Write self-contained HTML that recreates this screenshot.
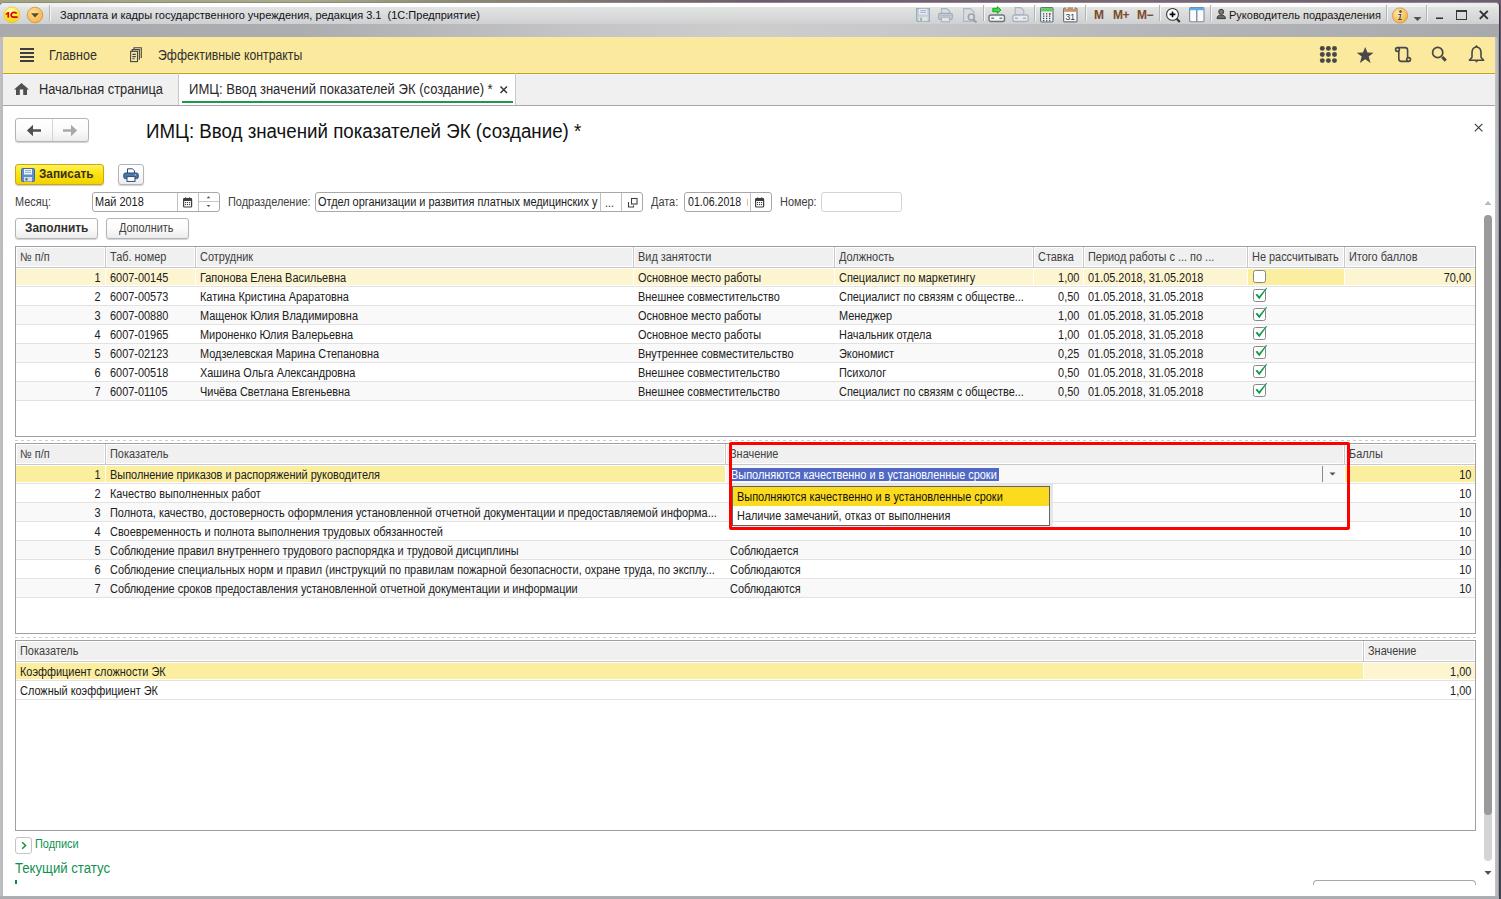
<!DOCTYPE html><html><head><meta charset="utf-8"><style>
html,body{margin:0;padding:0;}
body{width:1501px;height:899px;position:relative;overflow:hidden;background:#6a5a6a;font-family:"Liberation Sans", sans-serif;}
body div{position:absolute;box-sizing:border-box;}
</style></head><body>
<div style="left:0px;top:0px;width:760px;height:3px;background:linear-gradient(90deg,#9fa27a,#a9ac84 40%,#8d8a70 60%,#6f5a6c);"></div>
<div style="left:760px;top:0px;width:741px;height:3px;background:linear-gradient(90deg,#6f5a6c,#7d6878 50%,#6d5e70);"></div>
<div style="left:1499px;top:0px;width:2px;height:899px;background:linear-gradient(180deg,#6d5e70,#3a3448 30%,#2a2a3a 60%,#404858);"></div>
<div style="left:0px;top:2px;width:1499px;height:897px;background:#bcbdc0;border-radius:4px 4px 0 0;border-top:1px solid #8a8a8e;"></div>
<div style="left:0px;top:3px;width:1499px;height:21px;background:linear-gradient(180deg,#e6e6e7 0px,#e2e3e3 4.5px,#cfd0d1 21px);border-radius:4px 4px 0 0;"></div>
<div style="left:0px;top:3px;width:1499px;height:4px;background:linear-gradient(90deg,rgba(255,255,255,0.2) 0%,rgba(255,255,255,0.95) 12%,#ffffff 50%,rgba(255,255,255,0.95) 88%,rgba(255,255,255,0.2) 100%);border-radius:4px 4px 0 0;"></div>
<div style="left:0px;top:24px;width:1499px;height:13px;background:linear-gradient(90deg,#a9aaad 0%,#acadb0 20%,#c4c4c6 38%,#cdcdce 50%,#c8c8ca 60%,#b4b5b8 78%,#a8a9ad 100%);"></div>
<div style="left:1495px;top:37px;width:4px;height:859px;background:linear-gradient(90deg,#c4c5c8,#b4b5b8 70%,#8e8e94);"></div>
<div style="left:0px;top:37px;width:3px;height:859px;background:linear-gradient(90deg,#c0c1c4,#b8b9bc);"></div>
<div style="left:0px;top:896px;width:1499px;height:3px;background:linear-gradient(180deg,#b0b1b4,#a8a9ac);"></div>
<div style="left:1499px;top:4px;width:1px;height:895px;background:#3a3a44;"></div>
<div style="left:3px;top:37px;width:1492px;height:859px;background:#ffffff;"></div>
<svg style="position:absolute;left:3px;top:6px;" width="18" height="18" viewBox="0 0 18 18"><defs><radialGradient id="lg" cx="45%" cy="30%" r="75%"><stop offset="0" stop-color="#fffbd0"/><stop offset="0.55" stop-color="#ffec30"/><stop offset="1" stop-color="#f4cc00"/></radialGradient></defs><circle cx="8.8" cy="8.8" r="7.9" fill="url(#lg)" stroke="#e0c060" stroke-width="0.7"/><path d="M2.7 7.6 L5 6 H6.1 V11.8 H4.4 V8.2 L2.7 9.1 Z" fill="#e00000"/><path d="M13.6 7.6 C13.1 6.4 12.1 6.3 11.1 6.3 C9.5 6.3 8.1 7.5 8.1 9 C8.1 10.6 9.3 11.2 10.6 11.2 H14.6" fill="none" stroke="#e00000" stroke-width="1.7"/></svg>
<svg style="position:absolute;left:26px;top:6px;" width="18" height="18" viewBox="0 0 18 18"><defs><radialGradient id="og" cx="40%" cy="35%" r="70%"><stop offset="0" stop-color="#ffe0a0"/><stop offset="1" stop-color="#f8b040"/></radialGradient></defs><circle cx="9" cy="9" r="7.8" fill="url(#og)" stroke="#c89838" stroke-width="0.8"/><path d="M5 7.2 L13 7.2 L9 11.5 Z" fill="#5a4a30"/></svg>
<div style="left:49px;top:5px;width:1px;height:16px;background:#b4b4b6;"></div>
<div style="left:50px;top:5px;width:1px;height:16px;background:#f4f4f4;"></div>
<div style="left:60px;top:10px;font-size:11px;line-height:11px;color:#101020;white-space:pre;">Зарплата и кадры государственного учреждения, редакция 3.1  (1С:Предприятие)</div>
<svg style="position:absolute;left:916px;top:8px;" width="15" height="15" viewBox="0 0 15 15"><path d="M0.6 0.6 H13.4 V13.4 H1.6 L0.6 12.4 Z" fill="#c8d0da" stroke="#9eacbc" stroke-width="1.2"/><rect x="3" y="0.8" width="8.2" height="5.6" fill="#e8ecf0"/><path d="M4.2 2.6 H10 M4.2 4.4 H10" stroke="#9eacbc" stroke-width="0.9"/><rect x="3" y="8.8" width="8.5" height="4.4" fill="#dde6dc"/><rect x="4.2" y="9.6" width="1.8" height="3.4" fill="#9eacbc"/></svg>
<svg style="position:absolute;left:938px;top:8px;" width="16" height="15" viewBox="0 0 16 15"><path d="M3.5 0.6 H8.8 L11.5 3.3 V6 H3.5 Z" fill="#dcdcdc" stroke="#a8b4c2" stroke-width="1.1"/><rect x="0.7" y="5.3" width="13.6" height="6" rx="1.6" fill="#c8d0d8" stroke="#9eacbc" stroke-width="1.3"/><path d="M2.5 7.3 H12.5" stroke="#a8b4c2" stroke-width="0.9"/><rect x="3.5" y="9.2" width="8" height="4.6" fill="#e4e4e4" stroke="#a8b4c2" stroke-width="1.1"/></svg>
<svg style="position:absolute;left:963px;top:8px;" width="16" height="16" viewBox="0 0 16 16"><path d="M0.6 0.6 H7.5 L11 4.1 V13.4 H0.6 Z" fill="#dcdcdc" stroke="#a8b8cc" stroke-width="1.1"/><circle cx="8.3" cy="9" r="3" fill="#dcdcdc" stroke="#98a4ac" stroke-width="1.6"/><path d="M10.3 11.2 L13.5 14.6" stroke="#98a4ac" stroke-width="2"/></svg>
<div style="left:983px;top:5px;width:1px;height:16px;background:#b4b4b6;"></div>
<div style="left:984px;top:5px;width:1px;height:16px;background:#f4f4f4;"></div>
<svg style="position:absolute;left:988px;top:6px;" width="18" height="17" viewBox="0 0 18 17"><path d="M4.8 2.3 H9.3 V0.6 L13 4 L9.3 7.4 V5.7 H4.8 Z" fill="#38e038" stroke="#1a9a1a" stroke-width="0.9"/><rect x="1" y="9" width="15.5" height="6.5" rx="2" fill="#f4f4f4" stroke="#6c747c" stroke-width="1.4"/><path d="M3.3 12.2 H6 M11.5 12.2 H14.2" stroke="#7a828a" stroke-width="1.6"/><path d="M6.5 12.2 H11" stroke="#ffffff" stroke-width="1.3"/></svg>
<svg style="position:absolute;left:1012px;top:7px;" width="17" height="16" viewBox="0 0 17 16"><path d="M3.2 0.6 H8.8 L11.8 3.6 V7.5 H3.2 Z" fill="#dcdcdc" stroke="#a8b4c2" stroke-width="1.1"/><rect x="0.8" y="8" width="15.4" height="6.5" rx="2" fill="#e8eaec" stroke="#a8b4c2" stroke-width="1.4"/><path d="M3 11.2 H6 M11 11.2 H14" stroke="#a8b4c2" stroke-width="1.5"/></svg>
<div style="left:1034px;top:5px;width:1px;height:16px;background:#b4b4b6;"></div>
<div style="left:1035px;top:5px;width:1px;height:16px;background:#f4f4f4;"></div>
<svg style="position:absolute;left:1040px;top:7px;" width="14" height="16" viewBox="0 0 14 16"><rect x="0.6" y="0.6" width="12.4" height="14.4" rx="1.2" fill="#eef2f6" stroke="#6a7480" stroke-width="1.2"/><rect x="1.2" y="1.2" width="11.2" height="3.3" fill="#58d058"/><rect x="3" y="6.2" width="1.3" height="1.3" fill="#404850"/><rect x="6" y="6.2" width="1.3" height="1.3" fill="#404850"/><rect x="9" y="6.2" width="1.3" height="1.3" fill="#404850"/><rect x="3" y="8.5" width="1.3" height="1.3" fill="#404850"/><rect x="6" y="8.5" width="1.3" height="1.3" fill="#404850"/><rect x="9" y="8.5" width="1.3" height="1.3" fill="#404850"/><rect x="3" y="10.8" width="1.3" height="1.3" fill="#404850"/><rect x="6" y="10.8" width="1.3" height="1.3" fill="#404850"/><rect x="9" y="10.8" width="1.3" height="1.3" fill="#404850"/><rect x="3" y="13.1" width="1.3" height="1.3" fill="#404850"/><rect x="6" y="13.1" width="1.3" height="1.3" fill="#404850"/><rect x="9" y="13.1" width="1.3" height="1.3" fill="#404850"/><rect x="9" y="6" width="1.4" height="2" fill="#e02020"/></svg>
<svg style="position:absolute;left:1063px;top:6px;" width="15" height="17" viewBox="0 0 15 17"><rect x="0.6" y="2.1" width="13.4" height="13.8" rx="1.2" fill="#f8fafc" stroke="#6a7480" stroke-width="1.2"/><rect x="1.2" y="2.6" width="12.2" height="3.2" fill="#d09060"/><path d="M3.8 0.8 V3 M10.8 0.8 V3" stroke="#ffffff" stroke-width="1.1"/><text x="2.4" y="14" font-family="Liberation Sans" font-size="8.6" fill="#303840">31</text></svg>
<div style="left:1085px;top:5px;width:1px;height:16px;background:#b4b4b6;"></div>
<div style="left:1086px;top:5px;width:1px;height:16px;background:#f4f4f4;"></div>
<div style="left:1094px;top:9px;font-size:12px;line-height:12px;color:#7a4a28;white-space:pre;font-weight:bold;font-weight:bold;">M</div>
<div style="left:1113px;top:9px;font-size:12px;line-height:12px;color:#7a4a28;white-space:pre;font-weight:bold;font-weight:bold;letter-spacing:-0.5px;">M+</div>
<div style="left:1137px;top:9px;font-size:12px;line-height:12px;color:#7a4a28;white-space:pre;font-weight:bold;font-weight:bold;letter-spacing:-0.5px;">M−</div>
<div style="left:1159px;top:5px;width:1px;height:16px;background:#b4b4b6;"></div>
<div style="left:1160px;top:5px;width:1px;height:16px;background:#f4f4f4;"></div>
<svg style="position:absolute;left:1165px;top:7px;" width="17" height="17" viewBox="0 0 17 17"><circle cx="7.5" cy="7.4" r="5.9" fill="#ffffff" stroke="#383838" stroke-width="1.1"/><path d="M4.6 7.4 H10.4 M7.5 4.5 V10.3" stroke="#000000" stroke-width="1.6"/><path d="M11.6 11.8 L14.8 15" stroke="#303030" stroke-width="2.1"/></svg>
<svg style="position:absolute;left:1189px;top:7px;" width="16" height="16" viewBox="0 0 16 16"><rect x="0.6" y="0.6" width="14.4" height="14.2" rx="1.2" fill="#fafafa" stroke="#7c8c9c" stroke-width="1.1"/><rect x="1" y="1" width="13.6" height="2.2" fill="#58acf0"/><path d="M7.8 3 V14.6" stroke="#6a7a8a" stroke-width="1.2"/></svg>
<div style="left:1210px;top:5px;width:1px;height:16px;background:#b4b4b6;"></div>
<div style="left:1211px;top:5px;width:1px;height:16px;background:#f4f4f4;"></div>
<svg style="position:absolute;left:1216px;top:8px;" width="11" height="12" viewBox="0 0 11 12"><circle cx="5.2" cy="3.8" r="2.5" fill="#7a7a7a" stroke="#3a3a3a" stroke-width="1"/><path d="M1 10.6 C1 7.8 2.8 7.2 5.2 7.2 C7.6 7.2 9.4 7.8 9.4 10.6 Z" fill="#6a6a6a" stroke="#3a3a3a" stroke-width="1"/></svg>
<div style="left:1229px;top:10px;font-size:11px;line-height:11px;color:#201810;white-space:pre;">Руководитель подразделения</div>
<div style="left:1386px;top:5px;width:1px;height:16px;background:#b4b4b6;"></div>
<div style="left:1387px;top:5px;width:1px;height:16px;background:#f4f4f4;"></div>
<svg style="position:absolute;left:1391px;top:7px;" width="18" height="18" viewBox="0 0 18 18"><defs><radialGradient id="ig" cx="40%" cy="35%" r="70%"><stop offset="0" stop-color="#ffe8b0"/><stop offset="1" stop-color="#f4b040"/></radialGradient></defs><circle cx="9" cy="8.5" r="7.6" fill="url(#ig)" stroke="#c89838" stroke-width="0.8"/><circle cx="9.5" cy="4.6" r="1.3" fill="#505050"/><path d="M7.3 7 H10.3 L9.3 12 H10.8 V13 H7 V12 H8.2 L9 8 H7.3 Z" fill="#505050"/></svg>
<svg style="position:absolute;left:1413px;top:16px;" width="10" height="6" viewBox="0 0 10 6"><path d="M0.5 1 H8.5 L4.5 5 Z" fill="#505050"/></svg>
<div style="left:1426px;top:5px;width:1px;height:16px;background:#b4b4b6;"></div>
<div style="left:1427px;top:5px;width:1px;height:16px;background:#f4f4f4;"></div>
<div style="left:1436px;top:17px;width:7px;height:2px;background:#303030;"></div>
<div style="left:1436px;top:16.5px;width:7px;height:0.5px;background:#808080;"></div>
<div style="left:1456px;top:10px;width:11px;height:10px;border:1px solid #383838;border-top-width:2px;"></div>
<svg style="position:absolute;left:1478px;top:9px;" width="12" height="12" viewBox="0 0 12 12"><path d="M1.8 1.8 L9.8 9.8 M9.8 1.8 L1.8 9.8" stroke="#303030" stroke-width="1.9"/></svg>
<div style="left:3px;top:37px;width:1492px;height:36px;background:#fbe99d;"></div>
<div style="left:3px;top:72px;width:1492px;height:1px;background:#fcee9e;"></div>
<div style="left:3px;top:73px;width:1492px;height:1px;background:#bea41c;"></div>
<div style="left:3px;top:74px;width:1492px;height:1px;background:#f4f5fa;"></div>
<div style="left:20px;top:48.2px;width:14px;height:1.7px;background:#3c3c44;"></div>
<div style="left:20px;top:52.2px;width:14px;height:1.7px;background:#3c3c44;"></div>
<div style="left:20px;top:56.3px;width:14px;height:1.7px;background:#3c3c44;"></div>
<div style="left:20px;top:60.3px;width:14px;height:1.7px;background:#3c3c44;"></div>
<svg style="position:absolute;left:129px;top:47px;" width="14" height="16" viewBox="0 0 14 16"><g fill="none" stroke="#44444c" stroke-width="1.1"><rect x="1.6" y="4.4" width="6.9" height="10.2"/><path d="M3.2 4.4 V2.6 H10.4 V12.8"/><path d="M5 2.6 V0.8 H12.3 V11"/><path d="M3.4 7.4 H6.8 M3.4 9.6 H6.8 M3.4 11.8 H5.6"/></g></svg>
<div style="left:49px;top:48px;font-size:14px;line-height:14px;color:#303030;white-space:pre;transform:scaleX(0.895);transform-origin:0 0;">Главное</div>
<div style="left:158px;top:48px;font-size:14px;line-height:14px;color:#303030;white-space:pre;transform:scaleX(0.875);transform-origin:0 0;">Эффективные контракты</div>
<svg style="position:absolute;left:1319px;top:45px;" width="19" height="19" viewBox="0 0 19 19"><circle cx="3.3" cy="3.4" r="2.45" fill="#484848"/><circle cx="9.399999999999999" cy="3.4" r="2.45" fill="#484848"/><circle cx="15.5" cy="3.4" r="2.45" fill="#484848"/><circle cx="3.3" cy="9.5" r="2.45" fill="#484848"/><circle cx="9.399999999999999" cy="9.5" r="2.45" fill="#484848"/><circle cx="15.5" cy="9.5" r="2.45" fill="#484848"/><circle cx="3.3" cy="15.6" r="2.45" fill="#484848"/><circle cx="9.399999999999999" cy="15.6" r="2.45" fill="#484848"/><circle cx="15.5" cy="15.6" r="2.45" fill="#484848"/></svg>
<svg style="position:absolute;left:1356px;top:46px;" width="19" height="18" viewBox="0 0 19 18"><path d="M9.2 1 L11.4 6.6 L17.6 6.8 L12.7 10.6 L14.5 16.9 L9.2 13.2 L3.9 16.9 L5.7 10.6 L0.8 6.8 L7 6.6 Z" fill="#484848"/></svg>
<svg style="position:absolute;left:1394px;top:46px;" width="19" height="17" viewBox="0 0 19 17"><g fill="none" stroke="#484848" stroke-width="1.6"><circle cx="3.5" cy="3.5" r="1.9"/><circle cx="14.6" cy="13.5" r="1.9"/><path d="M3.5 1.6 H11 C12.6 1.6 13.6 2.6 13.6 4.2 V11.6"/><path d="M14.6 15.4 H7.4 C5.8 15.4 4.8 14.4 4.8 12.8 V5.2"/></g></svg>
<svg style="position:absolute;left:1431px;top:46px;" width="17" height="17" viewBox="0 0 17 17"><circle cx="6.7" cy="6.5" r="5.1" fill="none" stroke="#484848" stroke-width="1.7"/><path d="M11.2 11 L14.8 14.6" stroke="#484848" stroke-width="3"/></svg>
<svg style="position:absolute;left:1468px;top:45px;" width="17" height="19" viewBox="0 0 17 19"><path d="M8.5 1 L9.5 2.3 C12 2.8 13 5 13 8 V12.3 L15.6 15.2 H1.4 L4 12.3 V8 C4 5 5 2.8 7.5 2.3 Z" fill="none" stroke="#484848" stroke-width="1.6" stroke-linejoin="round"/><path d="M6.8 16.3 Q8.5 18.6 10.2 16.3 Z" fill="#484848"/></svg>
<div style="left:3px;top:75px;width:1492px;height:30px;background:#f0f0f0;"></div>
<div style="left:3px;top:105px;width:1492px;height:1px;background:#a8a8a8;"></div>
<svg style="position:absolute;left:13px;top:82px;" width="17" height="14" viewBox="0 0 17 14"><path d="M8.5 0.9 L16 7.6 H14 V13 H10.2 V7.6 H6.8 V13 H3 V7.6 H1 Z" fill="#505050"/></svg>
<div style="left:39px;top:82px;font-size:14px;line-height:14px;color:#282828;white-space:pre;transform:scaleX(0.915);transform-origin:0 0;">Начальная страница</div>
<div style="left:178px;top:73px;width:1px;height:32px;background:#c8c8c8;"></div>
<div style="left:179px;top:74px;width:337px;height:31px;background:#ffffff;"></div>
<div style="left:515px;top:73px;width:1px;height:32px;background:#c8c8c8;"></div>
<div style="left:182px;top:101px;width:331px;height:2px;background:#1a9a4a;"></div>
<div style="left:189px;top:82px;font-size:14px;line-height:14px;color:#282828;white-space:pre;transform:scaleX(0.933);transform-origin:0 0;">ИМЦ: Ввод значений показателей ЭК (создание) *</div>
<svg style="position:absolute;left:499px;top:85px;" width="10" height="10" viewBox="0 0 10 10"><path d="M1.5 1.5 L8 8 M8 1.5 L1.5 8" stroke="#383838" stroke-width="1.5"/></svg>
<div style="left:15px;top:118px;width:74px;height:24px;background:linear-gradient(180deg,#ffffff 0%,#fbfbfb 50%,#ececec 100%);border:1px solid #b4b4b4;border-radius:3px;box-shadow:0 1px 1px rgba(0,0,0,0.18);"></div>
<div style="left:52px;top:119px;width:1px;height:22px;background:#d4d4d4;"></div>
<svg style="position:absolute;left:26px;top:124px;" width="16" height="13" viewBox="0 0 16 13"><path d="M0.9 6.5 L7 0.8 V5.3 H15 V7.7 H7 V12.2 Z" fill="#505050"/></svg>
<svg style="position:absolute;left:62px;top:124px;" width="16" height="13" viewBox="0 0 16 13"><path d="M15.1 6.5 L9 0.8 V5.3 H1 V7.7 H9 V12.2 Z" fill="#a8a8a8"/></svg>
<div style="left:146px;top:122px;font-size:19.5px;line-height:19.5px;color:#111111;white-space:pre;transform:scaleX(0.96);transform-origin:0 0;">ИМЦ: Ввод значений показателей ЭК (создание) *</div>
<svg style="position:absolute;left:1474px;top:123px;" width="10" height="10" viewBox="0 0 10 10"><path d="M0.8 0.8 L8.4 8.4 M8.4 0.8 L0.8 8.4" stroke="#404040" stroke-width="1.2"/></svg>
<div style="left:15px;top:164px;width:89px;height:21px;background:linear-gradient(180deg,#fff25a 0%,#fde40e 45%,#f2d200 100%);border:1px solid #c8a818;border-radius:3px;box-shadow:0 1px 1px rgba(0,0,0,0.2);"></div>
<svg style="position:absolute;left:21px;top:168px;" width="14" height="14" viewBox="0 0 14 14"><rect x="0.5" y="0.5" width="13" height="13" rx="1" fill="#5a8ed0" stroke="#3a6aa8"/><rect x="3" y="1" width="8" height="5.5" fill="#f0f4f8"/><path d="M4 2.6 H10 M4 4.4 H10" stroke="#7a9ac0" stroke-width="0.8"/><rect x="3" y="9" width="8" height="4.5" fill="#d8dde4"/><rect x="4.5" y="10" width="2" height="2.5" fill="#5a6a80"/></svg>
<div style="left:39px;top:168px;font-size:12.5px;line-height:12.5px;color:#383020;white-space:pre;font-weight:bold;transform:scaleX(0.94);transform-origin:0 0;">Записать</div>
<div style="left:118px;top:164px;width:26px;height:21px;background:linear-gradient(180deg,#ffffff 0%,#fbfbfb 50%,#ececec 100%);border:1px solid #b4b4b4;border-radius:3px;box-shadow:0 1px 1px rgba(0,0,0,0.18);"></div>
<svg style="position:absolute;left:123px;top:168px;" width="16" height="14" viewBox="0 0 16 14"><path d="M4.5 5 V0.8 H9.5 L11.5 2.8 V5" fill="#ffffff" stroke="#2a4a78" stroke-width="1"/><rect x="0.8" y="5" width="14.4" height="5.6" rx="1.6" fill="#4a78aa" stroke="#2a4a78" stroke-width="1"/><circle cx="12.3" cy="6.8" r="0.6" fill="#fff"/><rect x="4" y="8.6" width="8" height="4.8" fill="#ffffff" stroke="#2a4a78" stroke-width="1"/></svg>
<div style="left:15px;top:196px;font-size:12px;line-height:12px;color:#404040;white-space:pre;transform:scaleX(0.91);transform-origin:0 0;">Месяц:</div>
<div style="left:92px;top:192px;width:128px;height:20px;background:#ffffff;border:1px solid #a8a8a8;border-radius:3px;"></div>
<div style="left:177px;top:193px;width:1px;height:18px;background:#c0c0c0;"></div>
<div style="left:198px;top:193px;width:1px;height:18px;background:#c0c0c0;"></div>
<div style="left:199px;top:201px;width:20px;height:1px;background:#c8c8c8;"></div>
<svg style="position:absolute;left:203px;top:195px;" width="10" height="5" viewBox="0 0 10 5"><path d="M3.6 3.2 L5.5 1.2 L7.4 3.2 Z" fill="#505050"/></svg>
<svg style="position:absolute;left:203px;top:204px;" width="10" height="5" viewBox="0 0 10 5"><path d="M3.6 1 L5.5 3 L7.4 1 Z" fill="#505050"/></svg>
<svg style="position:absolute;left:183px;top:197px;" width="10" height="11" viewBox="0 0 10 11"><rect x="0.6" y="1.6" width="8" height="8.4" rx="0.8" fill="#ffffff" stroke="#404040" stroke-width="1.2"/><rect x="0.6" y="1.6" width="8" height="2.4" fill="#404040"/><rect x="2" y="0.4" width="1.2" height="1.6" fill="#404040"/><rect x="6" y="0.4" width="1.2" height="1.6" fill="#404040"/><rect x="2" y="5" width="1.1" height="1.1" fill="#404040"/><rect x="4" y="5" width="1.1" height="1.1" fill="#404040"/><rect x="6" y="5" width="1.1" height="1.1" fill="#404040"/><rect x="2" y="7" width="1.1" height="1.1" fill="#404040"/><rect x="4" y="7" width="1.1" height="1.1" fill="#404040"/><rect x="6" y="7" width="1.1" height="1.1" fill="#404040"/></svg>
<div style="left:95px;top:196px;font-size:12px;line-height:12px;color:#202020;white-space:pre;transform:scaleX(0.91);transform-origin:0 0;">Май 2018</div>
<div style="left:228px;top:196px;font-size:12px;line-height:12px;color:#404040;white-space:pre;transform:scaleX(0.91);transform-origin:0 0;">Подразделение:</div>
<div style="left:315px;top:192px;width:328px;height:20px;background:#ffffff;border:1px solid #a8a8a8;border-radius:3px;"></div>
<div style="left:600px;top:193px;width:1px;height:18px;background:#c0c0c0;"></div>
<div style="left:621px;top:193px;width:1px;height:18px;background:#c0c0c0;"></div>
<div style="left:318px;top:196px;font-size:12px;line-height:12px;color:#202020;white-space:pre;transform:scaleX(0.91);transform-origin:0 0;">Отдел организации и развития платных медицинских у</div>
<div style="left:605px;top:197px;font-size:12px;line-height:12px;color:#303030;white-space:pre;transform:scaleX(0.91);transform-origin:0 0;">...</div>
<svg style="position:absolute;left:627px;top:197px;" width="11" height="11" viewBox="0 0 11 11"><path d="M1.5 5 V10 H6.5 V8.5" fill="none" stroke="#404040" stroke-width="1.1"/><rect x="4.5" y="1.5" width="5.5" height="5.5" fill="#fff" stroke="#404040" stroke-width="1.1"/></svg>
<div style="left:651px;top:196px;font-size:12px;line-height:12px;color:#404040;white-space:pre;transform:scaleX(0.91);transform-origin:0 0;">Дата:</div>
<div style="left:684px;top:192px;width:88px;height:20px;background:#ffffff;border:1px solid #a8a8a8;border-radius:3px;"></div>
<div style="left:750px;top:193px;width:1px;height:18px;background:#c0c0c0;"></div>
<div style="left:688px;top:196px;font-size:12px;line-height:12px;color:#202020;white-space:pre;transform:scaleX(0.885);transform-origin:0 0;">01.06.2018</div>
<div style="left:747px;top:199px;width:1px;height:7px;background:#f4b878;"></div>
<svg style="position:absolute;left:755px;top:197px;" width="10" height="11" viewBox="0 0 10 11"><rect x="0.6" y="1.6" width="8" height="8.4" rx="0.8" fill="#ffffff" stroke="#404040" stroke-width="1.2"/><rect x="0.6" y="1.6" width="8" height="2.4" fill="#404040"/><rect x="2" y="0.4" width="1.2" height="1.6" fill="#404040"/><rect x="6" y="0.4" width="1.2" height="1.6" fill="#404040"/><rect x="2" y="5" width="1.1" height="1.1" fill="#404040"/><rect x="4" y="5" width="1.1" height="1.1" fill="#404040"/><rect x="6" y="5" width="1.1" height="1.1" fill="#404040"/><rect x="2" y="7" width="1.1" height="1.1" fill="#404040"/><rect x="4" y="7" width="1.1" height="1.1" fill="#404040"/><rect x="6" y="7" width="1.1" height="1.1" fill="#404040"/></svg>
<div style="left:780px;top:196px;font-size:12px;line-height:12px;color:#404040;white-space:pre;transform:scaleX(0.91);transform-origin:0 0;">Номер:</div>
<div style="left:821px;top:192px;width:81px;height:20px;background:#ffffff;border:1px solid #d4d4d4;border-radius:3px;"></div>
<div style="left:15px;top:218px;width:83px;height:21px;background:linear-gradient(180deg,#ffffff 0%,#fbfbfb 50%,#ececec 100%);border:1px solid #b4b4b4;border-radius:3px;box-shadow:0 1px 1px rgba(0,0,0,0.18);"></div>
<div style="left:25px;top:222px;font-size:12.5px;line-height:12.5px;color:#303030;white-space:pre;font-weight:bold;transform:scaleX(0.95);transform-origin:0 0;">Заполнить</div>
<div style="left:106px;top:218px;width:83px;height:21px;background:linear-gradient(180deg,#ffffff 0%,#fbfbfb 50%,#ececec 100%);border:1px solid #b4b4b4;border-radius:3px;box-shadow:0 1px 1px rgba(0,0,0,0.18);"></div>
<div style="left:119px;top:222px;font-size:12px;line-height:12px;color:#404040;white-space:pre;transform:scaleX(0.91);transform-origin:0 0;">Дополнить</div>
<div style="left:15px;top:246px;width:1461px;height:191px;border:1px solid #a0a0a0;background:#ffffff;"></div>
<div style="left:17px;top:248px;width:87px;height:18px;background:#f0f0f0;"></div>
<div style="left:107px;top:248px;width:87px;height:18px;background:#f0f0f0;"></div>
<div style="left:197px;top:248px;width:435px;height:18px;background:#f0f0f0;"></div>
<div style="left:635px;top:248px;width:198px;height:18px;background:#f0f0f0;"></div>
<div style="left:836px;top:248px;width:196px;height:18px;background:#f0f0f0;"></div>
<div style="left:1035px;top:248px;width:47px;height:18px;background:#f0f0f0;"></div>
<div style="left:1085px;top:248px;width:161px;height:18px;background:#f0f0f0;"></div>
<div style="left:1249px;top:248px;width:94px;height:18px;background:#f0f0f0;"></div>
<div style="left:1346px;top:248px;width:128px;height:18px;background:#f0f0f0;"></div>
<div style="left:105px;top:247px;width:1px;height:20px;background:#c8c8c8;"></div>
<div style="left:195px;top:247px;width:1px;height:20px;background:#c8c8c8;"></div>
<div style="left:633px;top:247px;width:1px;height:20px;background:#c8c8c8;"></div>
<div style="left:834px;top:247px;width:1px;height:20px;background:#c8c8c8;"></div>
<div style="left:1033px;top:247px;width:1px;height:20px;background:#c8c8c8;"></div>
<div style="left:1083px;top:247px;width:1px;height:20px;background:#c8c8c8;"></div>
<div style="left:1247px;top:247px;width:1px;height:20px;background:#c8c8c8;"></div>
<div style="left:1344px;top:247px;width:1px;height:20px;background:#c8c8c8;"></div>
<div style="left:16px;top:267px;width:1459px;height:1px;background:#c8c8c8;"></div>
<div style="left:20px;top:251px;font-size:12px;line-height:12px;color:#404040;white-space:pre;transform:scaleX(0.91);transform-origin:0 0;">№ п/п</div>
<div style="left:110px;top:251px;font-size:12px;line-height:12px;color:#404040;white-space:pre;transform:scaleX(0.91);transform-origin:0 0;">Таб. номер</div>
<div style="left:200px;top:251px;font-size:12px;line-height:12px;color:#404040;white-space:pre;transform:scaleX(0.91);transform-origin:0 0;">Сотрудник</div>
<div style="left:638px;top:251px;font-size:12px;line-height:12px;color:#404040;white-space:pre;transform:scaleX(0.91);transform-origin:0 0;">Вид занятости</div>
<div style="left:839px;top:251px;font-size:12px;line-height:12px;color:#404040;white-space:pre;transform:scaleX(0.91);transform-origin:0 0;">Должность</div>
<div style="left:1038px;top:251px;font-size:12px;line-height:12px;color:#404040;white-space:pre;transform:scaleX(0.91);transform-origin:0 0;">Ставка</div>
<div style="left:1088px;top:251px;font-size:12px;line-height:12px;color:#404040;white-space:pre;transform:scaleX(0.91);transform-origin:0 0;">Период работы с ... по ...</div>
<div style="left:1252px;top:251px;font-size:12px;line-height:12px;color:#404040;white-space:pre;transform:scaleX(0.91);transform-origin:0 0;">Не рассчитывать</div>
<div style="left:1349px;top:251px;font-size:12px;line-height:12px;color:#404040;white-space:pre;transform:scaleX(0.91);transform-origin:0 0;">Итого баллов</div>
<div style="left:16px;top:269px;width:89px;height:16px;background:#fdf5cf;"></div>
<div style="left:106px;top:269px;width:89px;height:16px;background:#fdf5cf;"></div>
<div style="left:196px;top:269px;width:437px;height:16px;background:#fdf5cf;"></div>
<div style="left:634px;top:269px;width:200px;height:16px;background:#fdf5cf;"></div>
<div style="left:835px;top:269px;width:198px;height:16px;background:#fdf5cf;"></div>
<div style="left:1034px;top:269px;width:49px;height:16px;background:#fdf5cf;"></div>
<div style="left:1084px;top:269px;width:163px;height:16px;background:#fdf5cf;"></div>
<div style="left:1248px;top:269px;width:96px;height:16px;background:#fcee9f;"></div>
<div style="left:1345px;top:269px;width:130px;height:16px;background:#fdf5cf;"></div>
<div style="left:16px;top:286px;width:1459px;height:1px;background:#e2e2e2;"></div>
<div style="right:1400px;top:272px;font-size:12px;line-height:12px;color:#202020;white-space:pre;transform:scaleX(0.91);transform-origin:100% 0;">1</div>
<div style="left:110px;top:272px;font-size:12px;line-height:12px;color:#202020;white-space:pre;transform:scaleX(0.91);transform-origin:0 0;">6007-00145</div>
<div style="left:200px;top:272px;font-size:12px;line-height:12px;color:#202020;white-space:pre;transform:scaleX(0.91);transform-origin:0 0;">Гапонова Елена Васильевна</div>
<div style="left:638px;top:272px;font-size:12px;line-height:12px;color:#202020;white-space:pre;transform:scaleX(0.91);transform-origin:0 0;">Основное место работы</div>
<div style="left:839px;top:272px;font-size:12px;line-height:12px;color:#202020;white-space:pre;transform:scaleX(0.91);transform-origin:0 0;">Специалист по маркетингу</div>
<div style="right:422px;top:272px;font-size:12px;line-height:12px;color:#202020;white-space:pre;transform:scaleX(0.91);transform-origin:100% 0;">1,00</div>
<div style="left:1088px;top:272px;font-size:12px;line-height:12px;color:#202020;white-space:pre;transform:scaleX(0.91);transform-origin:0 0;">01.05.2018, 31.05.2018</div>
<div style="left:1253px;top:270px;width:13px;height:13px;border:1.6px solid #888888;border-radius:2.5px;background:#ffffff;"></div>
<div style="right:30px;top:272px;font-size:12px;line-height:12px;color:#202020;white-space:pre;transform:scaleX(0.91);transform-origin:100% 0;">70,00</div>
<div style="left:16px;top:305px;width:1459px;height:1px;background:#e2e2e2;"></div>
<div style="right:1400px;top:291px;font-size:12px;line-height:12px;color:#202020;white-space:pre;transform:scaleX(0.91);transform-origin:100% 0;">2</div>
<div style="left:110px;top:291px;font-size:12px;line-height:12px;color:#202020;white-space:pre;transform:scaleX(0.91);transform-origin:0 0;">6007-00573</div>
<div style="left:200px;top:291px;font-size:12px;line-height:12px;color:#202020;white-space:pre;transform:scaleX(0.91);transform-origin:0 0;">Катина Кристина Араратовна</div>
<div style="left:638px;top:291px;font-size:12px;line-height:12px;color:#202020;white-space:pre;transform:scaleX(0.91);transform-origin:0 0;">Внешнее совместительство</div>
<div style="left:839px;top:291px;font-size:12px;line-height:12px;color:#202020;white-space:pre;transform:scaleX(0.91);transform-origin:0 0;">Специалист по связям с обществе...</div>
<div style="right:422px;top:291px;font-size:12px;line-height:12px;color:#202020;white-space:pre;transform:scaleX(0.91);transform-origin:100% 0;">0,50</div>
<div style="left:1088px;top:291px;font-size:12px;line-height:12px;color:#202020;white-space:pre;transform:scaleX(0.91);transform-origin:0 0;">01.05.2018, 31.05.2018</div>
<div style="left:1253px;top:289px;width:13px;height:13px;border:1.6px solid #888888;border-radius:2.5px;background:#ffffff;"></div>
<svg style="position:absolute;left:1254px;top:287px;" width="14" height="14" viewBox="0 0 14 14"><path d="M1.5 7.8 L3.2 6.8 L5.2 9.2 L12.3 0.8 L13 1.5 L5.3 12.3 Z" fill="#109a48"/></svg>
<div style="left:16px;top:306px;width:1459px;height:18px;background:#f9f9f9;"></div>
<div style="left:16px;top:324px;width:1459px;height:1px;background:#e2e2e2;"></div>
<div style="right:1400px;top:310px;font-size:12px;line-height:12px;color:#202020;white-space:pre;transform:scaleX(0.91);transform-origin:100% 0;">3</div>
<div style="left:110px;top:310px;font-size:12px;line-height:12px;color:#202020;white-space:pre;transform:scaleX(0.91);transform-origin:0 0;">6007-00880</div>
<div style="left:200px;top:310px;font-size:12px;line-height:12px;color:#202020;white-space:pre;transform:scaleX(0.91);transform-origin:0 0;">Мащенок Юлия Владимировна</div>
<div style="left:638px;top:310px;font-size:12px;line-height:12px;color:#202020;white-space:pre;transform:scaleX(0.91);transform-origin:0 0;">Основное место работы</div>
<div style="left:839px;top:310px;font-size:12px;line-height:12px;color:#202020;white-space:pre;transform:scaleX(0.91);transform-origin:0 0;">Менеджер</div>
<div style="right:422px;top:310px;font-size:12px;line-height:12px;color:#202020;white-space:pre;transform:scaleX(0.91);transform-origin:100% 0;">1,00</div>
<div style="left:1088px;top:310px;font-size:12px;line-height:12px;color:#202020;white-space:pre;transform:scaleX(0.91);transform-origin:0 0;">01.05.2018, 31.05.2018</div>
<div style="left:1253px;top:308px;width:13px;height:13px;border:1.6px solid #888888;border-radius:2.5px;background:#ffffff;"></div>
<svg style="position:absolute;left:1254px;top:306px;" width="14" height="14" viewBox="0 0 14 14"><path d="M1.5 7.8 L3.2 6.8 L5.2 9.2 L12.3 0.8 L13 1.5 L5.3 12.3 Z" fill="#109a48"/></svg>
<div style="left:16px;top:343px;width:1459px;height:1px;background:#e2e2e2;"></div>
<div style="right:1400px;top:329px;font-size:12px;line-height:12px;color:#202020;white-space:pre;transform:scaleX(0.91);transform-origin:100% 0;">4</div>
<div style="left:110px;top:329px;font-size:12px;line-height:12px;color:#202020;white-space:pre;transform:scaleX(0.91);transform-origin:0 0;">6007-01965</div>
<div style="left:200px;top:329px;font-size:12px;line-height:12px;color:#202020;white-space:pre;transform:scaleX(0.91);transform-origin:0 0;">Мироненко Юлия Валерьевна</div>
<div style="left:638px;top:329px;font-size:12px;line-height:12px;color:#202020;white-space:pre;transform:scaleX(0.91);transform-origin:0 0;">Основное место работы</div>
<div style="left:839px;top:329px;font-size:12px;line-height:12px;color:#202020;white-space:pre;transform:scaleX(0.91);transform-origin:0 0;">Начальник отдела</div>
<div style="right:422px;top:329px;font-size:12px;line-height:12px;color:#202020;white-space:pre;transform:scaleX(0.91);transform-origin:100% 0;">1,00</div>
<div style="left:1088px;top:329px;font-size:12px;line-height:12px;color:#202020;white-space:pre;transform:scaleX(0.91);transform-origin:0 0;">01.05.2018, 31.05.2018</div>
<div style="left:1253px;top:327px;width:13px;height:13px;border:1.6px solid #888888;border-radius:2.5px;background:#ffffff;"></div>
<svg style="position:absolute;left:1254px;top:325px;" width="14" height="14" viewBox="0 0 14 14"><path d="M1.5 7.8 L3.2 6.8 L5.2 9.2 L12.3 0.8 L13 1.5 L5.3 12.3 Z" fill="#109a48"/></svg>
<div style="left:16px;top:344px;width:1459px;height:18px;background:#f9f9f9;"></div>
<div style="left:16px;top:362px;width:1459px;height:1px;background:#e2e2e2;"></div>
<div style="right:1400px;top:348px;font-size:12px;line-height:12px;color:#202020;white-space:pre;transform:scaleX(0.91);transform-origin:100% 0;">5</div>
<div style="left:110px;top:348px;font-size:12px;line-height:12px;color:#202020;white-space:pre;transform:scaleX(0.91);transform-origin:0 0;">6007-02123</div>
<div style="left:200px;top:348px;font-size:12px;line-height:12px;color:#202020;white-space:pre;transform:scaleX(0.91);transform-origin:0 0;">Модзелевская Марина Степановна</div>
<div style="left:638px;top:348px;font-size:12px;line-height:12px;color:#202020;white-space:pre;transform:scaleX(0.91);transform-origin:0 0;">Внутреннее совместительство</div>
<div style="left:839px;top:348px;font-size:12px;line-height:12px;color:#202020;white-space:pre;transform:scaleX(0.91);transform-origin:0 0;">Экономист</div>
<div style="right:422px;top:348px;font-size:12px;line-height:12px;color:#202020;white-space:pre;transform:scaleX(0.91);transform-origin:100% 0;">0,25</div>
<div style="left:1088px;top:348px;font-size:12px;line-height:12px;color:#202020;white-space:pre;transform:scaleX(0.91);transform-origin:0 0;">01.05.2018, 31.05.2018</div>
<div style="left:1253px;top:346px;width:13px;height:13px;border:1.6px solid #888888;border-radius:2.5px;background:#ffffff;"></div>
<svg style="position:absolute;left:1254px;top:344px;" width="14" height="14" viewBox="0 0 14 14"><path d="M1.5 7.8 L3.2 6.8 L5.2 9.2 L12.3 0.8 L13 1.5 L5.3 12.3 Z" fill="#109a48"/></svg>
<div style="left:16px;top:381px;width:1459px;height:1px;background:#e2e2e2;"></div>
<div style="right:1400px;top:367px;font-size:12px;line-height:12px;color:#202020;white-space:pre;transform:scaleX(0.91);transform-origin:100% 0;">6</div>
<div style="left:110px;top:367px;font-size:12px;line-height:12px;color:#202020;white-space:pre;transform:scaleX(0.91);transform-origin:0 0;">6007-00518</div>
<div style="left:200px;top:367px;font-size:12px;line-height:12px;color:#202020;white-space:pre;transform:scaleX(0.91);transform-origin:0 0;">Хашина Ольга Александровна</div>
<div style="left:638px;top:367px;font-size:12px;line-height:12px;color:#202020;white-space:pre;transform:scaleX(0.91);transform-origin:0 0;">Внешнее совместительство</div>
<div style="left:839px;top:367px;font-size:12px;line-height:12px;color:#202020;white-space:pre;transform:scaleX(0.91);transform-origin:0 0;">Психолог</div>
<div style="right:422px;top:367px;font-size:12px;line-height:12px;color:#202020;white-space:pre;transform:scaleX(0.91);transform-origin:100% 0;">0,50</div>
<div style="left:1088px;top:367px;font-size:12px;line-height:12px;color:#202020;white-space:pre;transform:scaleX(0.91);transform-origin:0 0;">01.05.2018, 31.05.2018</div>
<div style="left:1253px;top:365px;width:13px;height:13px;border:1.6px solid #888888;border-radius:2.5px;background:#ffffff;"></div>
<svg style="position:absolute;left:1254px;top:363px;" width="14" height="14" viewBox="0 0 14 14"><path d="M1.5 7.8 L3.2 6.8 L5.2 9.2 L12.3 0.8 L13 1.5 L5.3 12.3 Z" fill="#109a48"/></svg>
<div style="left:16px;top:382px;width:1459px;height:18px;background:#f9f9f9;"></div>
<div style="left:16px;top:400px;width:1459px;height:1px;background:#e2e2e2;"></div>
<div style="right:1400px;top:386px;font-size:12px;line-height:12px;color:#202020;white-space:pre;transform:scaleX(0.91);transform-origin:100% 0;">7</div>
<div style="left:110px;top:386px;font-size:12px;line-height:12px;color:#202020;white-space:pre;transform:scaleX(0.91);transform-origin:0 0;">6007-01105</div>
<div style="left:200px;top:386px;font-size:12px;line-height:12px;color:#202020;white-space:pre;transform:scaleX(0.91);transform-origin:0 0;">Чичёва Светлана Евгеньевна</div>
<div style="left:638px;top:386px;font-size:12px;line-height:12px;color:#202020;white-space:pre;transform:scaleX(0.91);transform-origin:0 0;">Внешнее совместительство</div>
<div style="left:839px;top:386px;font-size:12px;line-height:12px;color:#202020;white-space:pre;transform:scaleX(0.91);transform-origin:0 0;">Специалист по связям с обществе...</div>
<div style="right:422px;top:386px;font-size:12px;line-height:12px;color:#202020;white-space:pre;transform:scaleX(0.91);transform-origin:100% 0;">0,50</div>
<div style="left:1088px;top:386px;font-size:12px;line-height:12px;color:#202020;white-space:pre;transform:scaleX(0.91);transform-origin:0 0;">01.05.2018, 31.05.2018</div>
<div style="left:1253px;top:384px;width:13px;height:13px;border:1.6px solid #888888;border-radius:2.5px;background:#ffffff;"></div>
<svg style="position:absolute;left:1254px;top:382px;" width="14" height="14" viewBox="0 0 14 14"><path d="M1.5 7.8 L3.2 6.8 L5.2 9.2 L12.3 0.8 L13 1.5 L5.3 12.3 Z" fill="#109a48"/></svg>
<svg style="position:absolute;left:15px;top:440px;" width="1461" height="1" viewBox="0 0 1461 1"><line x1="0" y1="0.5" x2="1461" y2="0.5" stroke="#cdcdcd" stroke-width="1" stroke-dasharray="3,3"/></svg>
<div style="left:15px;top:443px;width:1461px;height:191px;border:1px solid #a0a0a0;background:#ffffff;"></div>
<div style="left:17px;top:445px;width:87px;height:18px;background:#f0f0f0;"></div>
<div style="left:107px;top:445px;width:617px;height:18px;background:#f0f0f0;"></div>
<div style="left:727px;top:445px;width:616px;height:18px;background:#f0f0f0;"></div>
<div style="left:1346px;top:445px;width:128px;height:18px;background:#f0f0f0;"></div>
<div style="left:105px;top:444px;width:1px;height:20px;background:#c8c8c8;"></div>
<div style="left:725px;top:444px;width:1px;height:20px;background:#c8c8c8;"></div>
<div style="left:1344px;top:444px;width:1px;height:20px;background:#c8c8c8;"></div>
<div style="left:16px;top:464px;width:1459px;height:1px;background:#c8c8c8;"></div>
<div style="left:20px;top:448px;font-size:12px;line-height:12px;color:#404040;white-space:pre;transform:scaleX(0.91);transform-origin:0 0;">№ п/п</div>
<div style="left:110px;top:448px;font-size:12px;line-height:12px;color:#404040;white-space:pre;transform:scaleX(0.91);transform-origin:0 0;">Показатель</div>
<div style="left:730px;top:448px;font-size:12px;line-height:12px;color:#404040;white-space:pre;transform:scaleX(0.91);transform-origin:0 0;">Значение</div>
<div style="left:1349px;top:448px;font-size:12px;line-height:12px;color:#404040;white-space:pre;transform:scaleX(0.91);transform-origin:0 0;">Баллы</div>
<div style="left:16px;top:466px;width:89px;height:16px;background:#fcee9f;"></div>
<div style="left:106px;top:466px;width:619px;height:16px;background:#fcee9f;"></div>
<div style="left:726px;top:466px;width:618px;height:16px;background:#f8f8f8;"></div>
<div style="left:1345px;top:466px;width:130px;height:16px;background:#fcee9f;"></div>
<div style="left:16px;top:483px;width:1459px;height:1px;background:#e2e2e2;"></div>
<div style="right:1400px;top:469px;font-size:12px;line-height:12px;color:#202020;white-space:pre;transform:scaleX(0.91);transform-origin:100% 0;">1</div>
<div style="left:110px;top:469px;font-size:12px;line-height:12px;color:#202020;white-space:pre;transform:scaleX(0.91);transform-origin:0 0;">Выполнение приказов и распоряжений руководителя</div>
<div style="right:30px;top:469px;font-size:12px;line-height:12px;color:#202020;white-space:pre;transform:scaleX(0.91);transform-origin:100% 0;">10</div>
<div style="left:16px;top:502px;width:1459px;height:1px;background:#e2e2e2;"></div>
<div style="right:1400px;top:488px;font-size:12px;line-height:12px;color:#202020;white-space:pre;transform:scaleX(0.91);transform-origin:100% 0;">2</div>
<div style="left:110px;top:488px;font-size:12px;line-height:12px;color:#202020;white-space:pre;transform:scaleX(0.91);transform-origin:0 0;">Качество выполненных работ</div>
<div style="right:30px;top:488px;font-size:12px;line-height:12px;color:#202020;white-space:pre;transform:scaleX(0.91);transform-origin:100% 0;">10</div>
<div style="left:16px;top:503px;width:1459px;height:18px;background:#f9f9f9;"></div>
<div style="left:16px;top:521px;width:1459px;height:1px;background:#e2e2e2;"></div>
<div style="right:1400px;top:507px;font-size:12px;line-height:12px;color:#202020;white-space:pre;transform:scaleX(0.91);transform-origin:100% 0;">3</div>
<div style="left:110px;top:507px;font-size:12px;line-height:12px;color:#202020;white-space:pre;transform:scaleX(0.91);transform-origin:0 0;">Полнота, качество, достоверность оформления установленной отчетной документации и предоставляемой информа...</div>
<div style="right:30px;top:507px;font-size:12px;line-height:12px;color:#202020;white-space:pre;transform:scaleX(0.91);transform-origin:100% 0;">10</div>
<div style="left:16px;top:540px;width:1459px;height:1px;background:#e2e2e2;"></div>
<div style="right:1400px;top:526px;font-size:12px;line-height:12px;color:#202020;white-space:pre;transform:scaleX(0.91);transform-origin:100% 0;">4</div>
<div style="left:110px;top:526px;font-size:12px;line-height:12px;color:#202020;white-space:pre;transform:scaleX(0.91);transform-origin:0 0;">Своевременность и полнота выполнения трудовых обязанностей</div>
<div style="right:30px;top:526px;font-size:12px;line-height:12px;color:#202020;white-space:pre;transform:scaleX(0.91);transform-origin:100% 0;">10</div>
<div style="left:16px;top:541px;width:1459px;height:18px;background:#f9f9f9;"></div>
<div style="left:16px;top:559px;width:1459px;height:1px;background:#e2e2e2;"></div>
<div style="right:1400px;top:545px;font-size:12px;line-height:12px;color:#202020;white-space:pre;transform:scaleX(0.91);transform-origin:100% 0;">5</div>
<div style="left:110px;top:545px;font-size:12px;line-height:12px;color:#202020;white-space:pre;transform:scaleX(0.91);transform-origin:0 0;">Соблюдение правил внутреннего трудового распорядка и трудовой дисциплины</div>
<div style="left:730px;top:545px;font-size:12px;line-height:12px;color:#202020;white-space:pre;transform:scaleX(0.91);transform-origin:0 0;">Соблюдается</div>
<div style="right:30px;top:545px;font-size:12px;line-height:12px;color:#202020;white-space:pre;transform:scaleX(0.91);transform-origin:100% 0;">10</div>
<div style="left:16px;top:578px;width:1459px;height:1px;background:#e2e2e2;"></div>
<div style="right:1400px;top:564px;font-size:12px;line-height:12px;color:#202020;white-space:pre;transform:scaleX(0.91);transform-origin:100% 0;">6</div>
<div style="left:110px;top:564px;font-size:12px;line-height:12px;color:#202020;white-space:pre;transform:scaleX(0.91);transform-origin:0 0;">Соблюдение специальных норм и правил (инструкций по правилам пожарной безопасности, охране труда, по эксплу...</div>
<div style="left:730px;top:564px;font-size:12px;line-height:12px;color:#202020;white-space:pre;transform:scaleX(0.91);transform-origin:0 0;">Соблюдаются</div>
<div style="right:30px;top:564px;font-size:12px;line-height:12px;color:#202020;white-space:pre;transform:scaleX(0.91);transform-origin:100% 0;">10</div>
<div style="left:16px;top:579px;width:1459px;height:18px;background:#f9f9f9;"></div>
<div style="left:16px;top:597px;width:1459px;height:1px;background:#e2e2e2;"></div>
<div style="right:1400px;top:583px;font-size:12px;line-height:12px;color:#202020;white-space:pre;transform:scaleX(0.91);transform-origin:100% 0;">7</div>
<div style="left:110px;top:583px;font-size:12px;line-height:12px;color:#202020;white-space:pre;transform:scaleX(0.91);transform-origin:0 0;">Соблюдение сроков предоставления установленной отчетной документации и информации</div>
<div style="left:730px;top:583px;font-size:12px;line-height:12px;color:#202020;white-space:pre;transform:scaleX(0.91);transform-origin:0 0;">Соблюдаются</div>
<div style="right:30px;top:583px;font-size:12px;line-height:12px;color:#202020;white-space:pre;transform:scaleX(0.91);transform-origin:100% 0;">10</div>
<svg style="position:absolute;left:15px;top:637px;" width="1461" height="1" viewBox="0 0 1461 1"><line x1="0" y1="0.5" x2="1461" y2="0.5" stroke="#cdcdcd" stroke-width="1" stroke-dasharray="3,3"/></svg>
<div style="left:15px;top:640px;width:1461px;height:191px;border:1px solid #a0a0a0;background:#ffffff;"></div>
<div style="left:17px;top:642px;width:1345px;height:18px;background:#f0f0f0;"></div>
<div style="left:1365px;top:642px;width:109px;height:18px;background:#f0f0f0;"></div>
<div style="left:1363px;top:641px;width:1px;height:20px;background:#c8c8c8;"></div>
<div style="left:16px;top:661px;width:1459px;height:1px;background:#c8c8c8;"></div>
<div style="left:20px;top:645px;font-size:12px;line-height:12px;color:#404040;white-space:pre;transform:scaleX(0.91);transform-origin:0 0;">Показатель</div>
<div style="left:1368px;top:645px;font-size:12px;line-height:12px;color:#404040;white-space:pre;transform:scaleX(0.91);transform-origin:0 0;">Значение</div>
<div style="left:16px;top:663px;width:1347px;height:16px;background:#fcee9f;"></div>
<div style="left:1364px;top:663px;width:111px;height:16px;background:#fdf5cf;"></div>
<div style="left:16px;top:680px;width:1459px;height:1px;background:#e2e2e2;"></div>
<div style="left:20px;top:666px;font-size:12px;line-height:12px;color:#202020;white-space:pre;transform:scaleX(0.91);transform-origin:0 0;">Коэффициент сложности ЭК</div>
<div style="right:30px;top:666px;font-size:12px;line-height:12px;color:#202020;white-space:pre;transform:scaleX(0.91);transform-origin:100% 0;">1,00</div>
<div style="left:16px;top:699px;width:1459px;height:1px;background:#e2e2e2;"></div>
<div style="left:20px;top:685px;font-size:12px;line-height:12px;color:#202020;white-space:pre;transform:scaleX(0.91);transform-origin:0 0;">Сложный коэффициент ЭК</div>
<div style="right:30px;top:685px;font-size:12px;line-height:12px;color:#202020;white-space:pre;transform:scaleX(0.91);transform-origin:100% 0;">1,00</div>
<div style="left:726px;top:465px;width:618px;height:18px;background:#f8f8f8;"></div>
<div style="left:732px;top:468px;width:267px;height:13px;background:#5068c4;"></div>
<div style="left:730.5px;top:469px;font-size:12px;line-height:12px;color:#ffffff;white-space:pre;transform:scaleX(0.91);transform-origin:0 0;">Выполняются качественно и в установленные сроки</div>
<div style="left:1322px;top:466px;width:1px;height:16px;background:#8a8a8a;"></div>
<svg style="position:absolute;left:1329px;top:472px;" width="7" height="4" viewBox="0 0 7 4"><path d="M0.5 0.5 H6.5 L3.5 3.5 Z" fill="#505050"/></svg>
<div style="left:732px;top:484px;width:321px;height:43px;background:#e6e6e6;"></div>
<div style="left:732px;top:486px;width:318px;height:40px;background:#ffffff;border:1px solid #646464;"></div>
<div style="left:733px;top:487px;width:316px;height:19px;background:#fcdb1e;"></div>
<div style="left:737px;top:491px;font-size:12px;line-height:12px;color:#101010;white-space:pre;transform:scaleX(0.91);transform-origin:0 0;">Выполняются качественно и в установленные сроки</div>
<div style="left:737px;top:510px;font-size:12px;line-height:12px;color:#202020;white-space:pre;transform:scaleX(0.91);transform-origin:0 0;">Наличие замечаний, отказ от выполнения</div>
<div style="left:729px;top:442px;width:621px;height:88px;border:3px solid #ff0000;border-radius:2px;"></div>
<svg style="position:absolute;left:1484px;top:200px;" width="8" height="6" viewBox="0 0 8 6"><path d="M0.5 5 L4 1 L7.5 5 Z" fill="#b8b8b8"/></svg>
<div style="left:1484px;top:805px;width:8px;height:56px;background:#d4d4d4;border-radius:0 0 4px 4px;"></div>
<div style="left:1484px;top:215px;width:8px;height:600px;background:#9a9a9a;border-radius:4px;"></div>
<svg style="position:absolute;left:1484px;top:870px;" width="8" height="6" viewBox="0 0 8 6"><path d="M0.5 1 L7.5 1 L4 5 Z" fill="#505050"/></svg>
<div style="left:15px;top:837px;width:17px;height:17px;border:1px solid #c4c4c4;border-radius:3px;background:#fff;"></div>
<svg style="position:absolute;left:20px;top:841px;" width="8" height="9" viewBox="0 0 8 9"><path d="M2.2 1.3 L5.6 4.5 L2.2 7.7" fill="none" stroke="#0c8c40" stroke-width="1.4"/></svg>
<div style="left:35px;top:838px;font-size:12px;line-height:12px;color:#109050;white-space:pre;transform:scaleX(0.91);transform-origin:0 0;">Подписи</div>
<div style="left:15px;top:861px;font-size:14px;line-height:14px;color:#109050;white-space:pre;transform:scaleX(0.94);transform-origin:0 0;">Текущий статус</div>
<div style="left:15px;top:880px;width:2px;height:4px;background:#0a8a40;"></div>
<div style="left:1313px;top:880px;width:163px;height:5px;border:1px solid #a8a8a8;border-bottom:none;border-radius:4px 4px 0 0;"></div>
</body></html>
